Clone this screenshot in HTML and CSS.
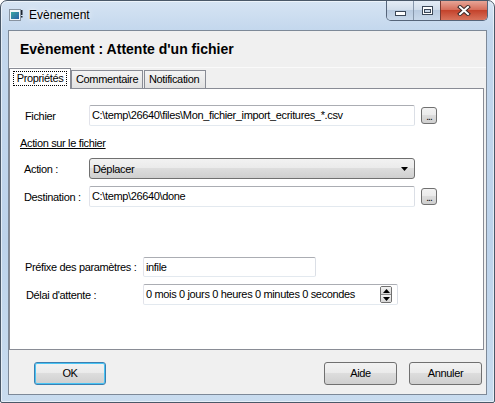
FILE: index.html
```html
<!DOCTYPE html>
<html lang="fr">
<head>
  <meta charset="UTF-8">
  <title>Evènement</title>
  <link rel="stylesheet" href="styles.css">
</head>
<body>
  <div class="window">
    <div class="titlebar">
      <svg class="app-icon" width="14" height="12" viewBox="0 0 14 12">
        <defs>
          <linearGradient id="ico" x1="0" y1="0" x2="1" y2="1">
            <stop offset="0" stop-color="#3aa6a0"/>
            <stop offset="1" stop-color="#2a5fa8"/>
          </linearGradient>
        </defs>
        <rect x="0.5" y="0.5" width="11" height="11" fill="#f4f6f8" stroke="#8893a0"/>
        <rect x="2" y="3" width="8" height="7" fill="url(#ico)"/>
        <rect x="12" y="1" width="1.5" height="5" fill="#1c2530"/>
        <rect x="12" y="7" width="1.5" height="1.5" fill="#1c2530"/>
      </svg>
      <span class="title">Evènement</span>
      <div class="caption-buttons">
        <span class="cap cap-min">
          <svg width="11" height="5" viewBox="0 0 11 5"><rect x="0.5" y="0.5" width="10" height="4" fill="#fff" stroke="#3b4757"/></svg>
        </span>
        <span class="cap cap-max">
          <svg width="11" height="9" viewBox="0 0 11 9"><rect x="0.5" y="0.5" width="10" height="8" fill="#fff" stroke="#3b4757"/><rect x="2.5" y="3.5" width="6" height="3" fill="#c9d7e8" stroke="#3b4757"/></svg>
        </span>
        <span class="cap cap-close">
          <svg width="14" height="11" viewBox="0 0 14 11">
            <path d="M3 2 L11 9 M11 2 L3 9" stroke="#3b2a2a" stroke-width="4" stroke-linecap="square"/>
            <path d="M3 2 L11 9 M11 2 L3 9" stroke="#fff" stroke-width="2" stroke-linecap="square"/>
          </svg>
        </span>
      </div>
    </div>

    <div class="client">
      <div class="header">Evènement : Attente d'un fichier</div>

      <div class="tabs">
        <div class="tab active"><span class="focus">Propriétés</span></div>
        <div class="tab">Commentaire</div>
        <div class="tab">Notification</div>
      </div>

      <div class="panel">
        <div class="row">
          <span class="lbl lbl-short pad1">Fichier</span>
          <div class="textbox wide">C:\temp\26640\files\Mon_fichier_import_ecritures_*.csv</div>
          <span class="browse">...</span>
        </div>

        <div class="section">Action sur le fichier</div>

        <div class="row row-action">
          <span class="lbl lbl-short">Action :</span>
          <div class="combo">
            <span>Déplacer</span>
            <svg class="combo-arrow" width="7" height="4" viewBox="0 0 7 4"><path d="M0 0 H7 L3.5 4 Z" fill="#000"/></svg>
          </div>
        </div>

        <div class="row row-dest">
          <span class="lbl lbl-short">Destination :</span>
          <div class="textbox wide">C:\temp\26640\done</div>
          <span class="browse">...</span>
        </div>

        <div class="row row-prefix">
          <span class="lbl lbl-long pad1">Préfixe des paramètres :</span>
          <div class="textbox prefix">infile</div>
        </div>

        <div class="row row-delay">
          <span class="lbl lbl-long pad2">Délai d'attente :</span>
          <div class="textbox delay">
            <span>0 mois 0 jours 0 heures 0 minutes 0 secondes</span>
            <span class="spinner">
              <span class="spin-half"><svg width="7" height="4" viewBox="0 0 7 4"><path d="M3.5 0 L7 4 H0 Z" fill="#000"/></svg></span>
              <span class="spin-half"><svg width="7" height="4" viewBox="0 0 7 4"><path d="M0 0 H7 L3.5 4 Z" fill="#000"/></svg></span>
            </span>
          </div>
        </div>
      </div>

      <div class="footer">
        <span class="btn default">OK</span>
        <span class="btn push-right">Aide</span>
        <span class="btn">Annuler</span>
      </div>
    </div>
  </div>
</body>
</html>
```

FILE: styles.css
```css
body {
  margin: 0;
  font-family: "Liberation Sans", Arial, sans-serif;
  font-size: 11px;
  letter-spacing: -0.35px;
  color: #000;
}

.window {
  width: 495px;
  height: 403px;
  box-sizing: border-box;
  border: 1px solid #4a5868;
  border-radius: 7px 7px 2px 2px;
  padding: 0 7px 7px 7px;
  background: linear-gradient(180deg, #d6e4f3 0, #c3d7ed 30px, #bdd3eb 60%, #c9dcef 100%);
  box-shadow: inset 0 0 0 1px rgba(255, 255, 255, 0.55);
  display: flex;
  flex-direction: column;
}

/* barre de titre */
.titlebar {
  height: 29px;
  display: flex;
  align-items: flex-start;
  flex-shrink: 0;
}

.app-icon {
  margin: 8px 0 0 1px;
}

.title {
  margin: 7px 0 0 6px;
  font-size: 12px;
  line-height: 14px;
  letter-spacing: 0;
  text-shadow: 0 0 6px rgba(255, 255, 255, 0.95), 0 0 2px #fff;
}

.caption-buttons {
  margin-left: auto;
  display: flex;
  height: 19px;
  border: 1px solid #56657a;
  border-top: none;
  border-radius: 0 0 5px 5px;
  overflow: hidden;
  margin-right: -1px;
}

.cap {
  display: flex;
  align-items: center;
  justify-content: center;
  width: 26px;
  background: linear-gradient(180deg, #e4ecf5 0%, #d2deeb 45%, #b9cbe0 50%, #c8d8ea 100%);
  border-left: 1px solid #8797ab;
}

.cap:first-child {
  border-left: none;
}

.cap-min svg {
  margin-top: 6px;
}

.cap-close {
  width: 46px;
  background: linear-gradient(180deg, #e7a597 0%, #d66f5c 45%, #c4432c 50%, #d8735c 100%);
  border-left: 1px solid #7b3b33;
}

/* zone client */
.client {
  flex: 1;
  display: flex;
  flex-direction: column;
  border: 1px solid #7d8998;
  background: #f0f0f0;
}

.header {
  height: 36px;
  line-height: 37px;
  padding-left: 11px;
  font-size: 14px;
  font-weight: bold;
  letter-spacing: 0;
  border-bottom: 1px solid #fafafa;
}

.tabs {
  height: 20px;
  display: flex;
  align-items: flex-end;
}

.tab {
  height: 17px;
  line-height: 17px;
  box-sizing: content-box;
  padding: 0 4px;
  border: 1px solid #898c95;
  border-bottom: none;
  background: linear-gradient(180deg, #f4f4f4, #e2e2e2);
  margin-left: 1px;
  white-space: nowrap;
}

.tab:nth-child(2) {
  width: 62px;
  margin-left: 0;
}

.tab:nth-child(3) {
  width: 52px;
  margin-left: 1px;
}

.tab.active {
  position: relative;
  z-index: 1;
  width: 52px;
  height: 20px;
  line-height: 20px;
  margin: 0 0 -1px 0;
  padding: 0 4px;
  background: #fff;
  display: flex;
  align-items: center;
  justify-content: center;
}

.focus {
  display: block;
  line-height: 13px;
  padding: 0 3px;
  border: 1px dotted #000;
  margin-top: -2px;
}

.panel {
  height: 262px;
  margin-right: 2px;
  box-sizing: border-box;
  border: 1px solid #898c95;
  background: #fff;
  padding: 16px 0 0 14px;
}

.row {
  display: flex;
  align-items: center;
  height: 21px;
}

.lbl {
  flex-shrink: 0;
  box-sizing: border-box;
  white-space: nowrap;
}

.lbl-short {
  width: 65px;
}

.lbl-long {
  width: 119px;
}

.pad1 {
  padding-left: 1px;
}

.pad2 {
  padding-left: 2px;
}

.textbox {
  height: 21px;
  box-sizing: border-box;
  line-height: 19px;
  padding-left: 2px;
  border: 1px solid;
  border-color: #abadb3 #dbdfe6 #e3e9ef #e2e3ea;
  border-radius: 2px;
  background: #fff;
  white-space: nowrap;
  overflow: hidden;
}

.wide {
  width: 326px;
}

.browse {
  width: 16px;
  height: 17px;
  box-sizing: border-box;
  margin-left: 6px;
  border: 1px solid #707070;
  border-radius: 3px;
  background: linear-gradient(180deg, #f2f2f2 0%, #ebebeb 45%, #dddddd 50%, #cfcfcf 100%);
  font-size: 10px;
  line-height: 18px;
  text-align: center;
  letter-spacing: -1px;
}

.section {
  height: 14px;
  line-height: 14px;
  margin: 10px 0 0 -4px;
  text-decoration: underline;
}

.row-action {
  margin-top: 8px;
}

.combo {
  width: 326px;
  height: 21px;
  box-sizing: border-box;
  display: flex;
  align-items: center;
  padding: 0 6px 0 3px;
  border: 1px solid #707070;
  border-radius: 3px;
  background: linear-gradient(180deg, #f2f2f2 0%, #ebebeb 45%, #dddddd 50%, #cfcfcf 100%);
}

.combo-arrow {
  margin-left: auto;
}

.row-dest {
  margin-top: 7px;
}

.row-prefix {
  margin-top: 50px;
  height: 20px;
}

.prefix {
  width: 173px;
  height: 20px;
  line-height: 18px;
}

.row-delay {
  margin-top: 7px;
}

.delay {
  width: 255px;
  display: flex;
  align-items: center;
}

.spinner {
  margin-left: auto;
  margin-right: 5px;
  width: 12px;
  height: 17px;
  box-sizing: border-box;
  display: flex;
  flex-direction: column;
  border: 1px solid #707070;
  border-radius: 2px;
  overflow: hidden;
}

.spin-half {
  flex: 1;
  display: flex;
  align-items: center;
  justify-content: center;
  background: linear-gradient(180deg, #f2f2f2, #d6d6d6);
}

.spin-half + .spin-half {
  border-top: 1px solid #8a8a8a;
}

/* boutons du bas */
.footer {
  flex: 1;
  display: flex;
  align-items: flex-start;
  padding: 12px 4px 0 25px;
}

.btn {
  width: 73px;
  height: 23px;
  box-sizing: border-box;
  border: 1px solid #707070;
  border-radius: 3px;
  background: linear-gradient(180deg, #f2f2f2 0%, #ebebeb 45%, #dddddd 50%, #cfcfcf 100%);
  line-height: 21px;
  text-align: center;
}

.btn + .btn {
  margin-left: 12px;
}

.btn.default {
  width: 72px;
  border-color: #3c7fb1;
  box-shadow: inset 0 0 0 1px #48c4f4;
}

.btn.push-right {
  margin-left: auto;
}
```
